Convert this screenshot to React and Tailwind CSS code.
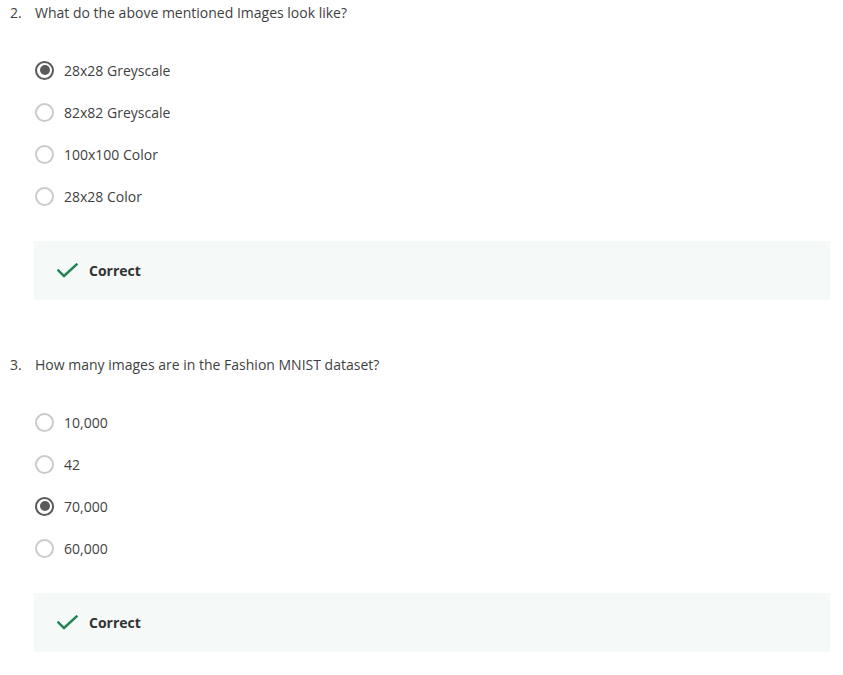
import React from "react";

const questions = [
  {
    num: "2.",
    text: "What do the above mentioned Images look like?",
    options: ["28x28 Greyscale", "82x82 Greyscale", "100x100 Color", "28x28 Color"],
    picked: 0,
    gap: "mt-0",
  },
  {
    num: "3.",
    text: "How many images are in the Fashion MNIST dataset?",
    options: ["10,000", "42", "70,000", "60,000"],
    picked: 2,
    gap: "mt-[54px]",
  },
];

function Radio({ checked }) {
  if (checked) {
    return (
      <span className="w-[19px] h-[19px] rounded-full border-2 border-[#5a5a5a] flex items-center justify-center shrink-0">
        <span className="w-[10px] h-[10px] rounded-full bg-[#5a5a5a]" />
      </span>
    );
  }
  return <span className="w-[19px] h-[19px] rounded-full border-2 border-[#cbcbcb] shrink-0" />;
}

function Question({ q }) {
  return (
    <div className={q.gap}>
      <div className="flex h-[21px] items-center text-[14px] leading-[21px] text-[#3f3f3f]">
        <span className="w-[25px]">{q.num}</span>
        <span>{q.text}</span>
      </div>

      <div className="ml-[25px] mt-[26px]">
        {q.options.map((opt, i) => (
          <div key={i} className="flex items-center h-[42px] gap-[10px]">
            <Radio checked={i === q.picked} />
            <span className="text-[14px] text-[#3f3f3f]">{opt}</span>
          </div>
        ))}
      </div>

      <div className="ml-[24px] mt-[24px] h-[59px] bg-[#f5f9f8] flex items-center pl-[23px] gap-[11px]">
        <svg width="21" height="15" viewBox="0 0 21 15" fill="none">
          <path d="M1.5 7.5 L7 13 L19.5 1.5" stroke="#1f8354" strokeWidth="2.4" strokeLinecap="square" />
        </svg>
        <span className="text-[14px] font-bold text-[#333]">Correct</span>
      </div>
    </div>
  );
}

export default function App() {
  return (
    <div className="w-[843px] h-[675px] bg-white pl-[10px] pr-[13px] pt-[2px] overflow-hidden" style={{ fontFamily: '"Open Sans", sans-serif' }}>
      {questions.map((q, i) => (
        <Question key={i} q={q} />
      ))}
    </div>
  );
}
